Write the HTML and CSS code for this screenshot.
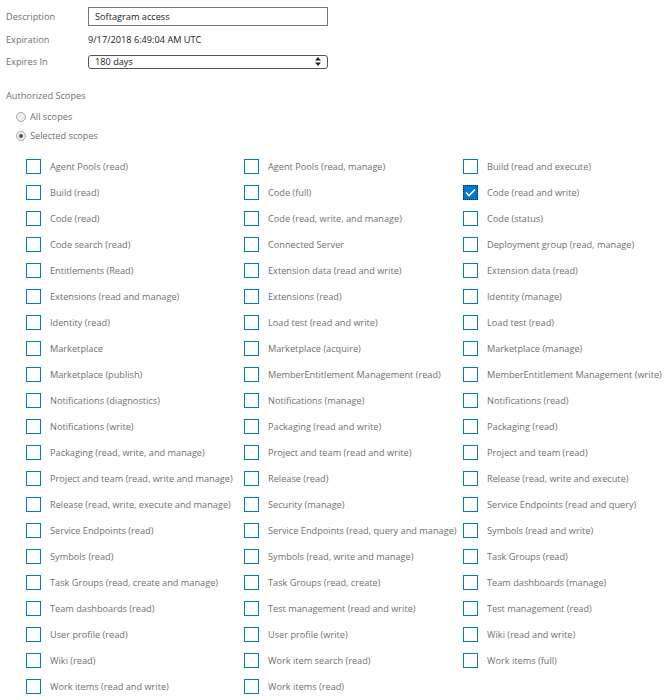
FILE: index.html
```html
<!DOCTYPE html>
<html lang="en">
<head>
    <meta charset="UTF-8">
    <title>Personal access token</title>
    <link rel="stylesheet" href="styles.css">
</head>
<body>
    <div class="form">
        <div class="field">
            <label class="field-label" for="desc">Description</label>
            <input class="text-input" id="desc" type="text" value="Softagram access">
        </div>
        <div class="field">
            <span class="field-label">Expiration</span>
            <span class="field-value">9/17/2018 6:49:04 AM UTC</span>
        </div>
        <div class="field short">
            <span class="field-label">Expires In</span>
            <div class="select">
                <span>180 days</span>
                <svg class="select-arrows" width="6" height="9" viewBox="0 0 6 9">
                    <path d="M3 0 L6 3.5 H0 Z M3 9 L6 5.5 H0 Z" fill="#222"/>
                </svg>
            </div>
        </div>
    </div>

    <h3 class="section-title">Authorized Scopes</h3>
    <div class="radios">
        <div class="radio"><span class="radio-dot"></span>All scopes</div>
        <div class="radio"><span class="radio-dot checked"></span>Selected scopes</div>
    </div>

    <div class="scopes" id="scopes"></div>

    <script>
        const scopes = [
            'Agent Pools (read)', 'Agent Pools (read, manage)', 'Build (read and execute)',
            'Build (read)', 'Code (full)', 'Code (read and write)',
            'Code (read)', 'Code (read, write, and manage)', 'Code (status)',
            'Code search (read)', 'Connected Server', 'Deployment group (read, manage)',
            'Entitlements (Read)', 'Extension data (read and write)', 'Extension data (read)',
            'Extensions (read and manage)', 'Extensions (read)', 'Identity (manage)',
            'Identity (read)', 'Load test (read and write)', 'Load test (read)',
            'Marketplace', 'Marketplace (acquire)', 'Marketplace (manage)',
            'Marketplace (publish)', 'MemberEntitlement Management (read)', 'MemberEntitlement Management (write)',
            'Notifications (diagnostics)', 'Notifications (manage)', 'Notifications (read)',
            'Notifications (write)', 'Packaging (read and write)', 'Packaging (read)',
            'Packaging (read, write, and manage)', 'Project and team (read and write)', 'Project and team (read)',
            'Project and team (read, write and manage)', 'Release (read)', 'Release (read, write and execute)',
            'Release (read, write, execute and manage)', 'Security (manage)', 'Service Endpoints (read and query)',
            'Service Endpoints (read)', 'Service Endpoints (read, query and manage)', 'Symbols (read and write)',
            'Symbols (read)', 'Symbols (read, write and manage)', 'Task Groups (read)',
            'Task Groups (read, create and manage)', 'Task Groups (read, create)', 'Team dashboards (manage)',
            'Team dashboards (read)', 'Test management (read and write)', 'Test management (read)',
            'User profile (read)', 'User profile (write)', 'Wiki (read and write)',
            'Wiki (read)', 'Work item search (read)', 'Work items (full)',
            'Work items (read and write)', 'Work items (read)'
        ];
        const checked = ['Code (read and write)'];
        const list = document.getElementById('scopes');
        for (const name of scopes) {
            const item = document.createElement('div');
            item.className = 'scope';
            const box = document.createElement('span');
            box.className = checked.includes(name) ? 'checkbox checked' : 'checkbox';
            if (checked.includes(name)) {
                box.innerHTML = '<svg width="11" height="9" viewBox="0 0 11 9"><path d="M1 4.5 L4 7.5 L10 1.5" fill="none" stroke="#fff" stroke-width="1.6"/></svg>';
            }
            const text = document.createElement('span');
            text.className = 'scope-name';
            text.innerText = name;
            item.appendChild(box);
            item.appendChild(text);
            list.appendChild(item);
        }
    </script>
</body>
</html>
```

FILE: styles.css
```css
body {
    font-family: "Open Sans", "Noto Sans", sans-serif;
    font-size: 9.2px;
    color: #707070;
    background-color: #fff;
    margin: 0;
    padding: 0;
}
.form {
    padding: 7px 0 0 6px;
}
.field {
    display: flex;
    align-items: center;
    height: 19px;
    margin-bottom: 4px;
}
.field.short {
    height: 17px;
}
.field-label {
    width: 82px;
    flex: none;
}
.field-value {
    color: #222;
}
.text-input {
    width: 240px;
    height: 19px;
    box-sizing: border-box;
    border: 1px solid #767676;
    padding: 0 6px;
    margin: 0;
    font-family: inherit;
    font-size: 9.2px;
    color: #222;
    outline: none;
}
.select {
    width: 240px;
    height: 14px;
    box-sizing: border-box;
    border: 1px solid #555;
    border-radius: 3px;
    padding: 0 6px;
    display: flex;
    align-items: center;
    justify-content: space-between;
    color: #222;
}
.section-title {
    font-size: 9.2px;
    font-weight: normal;
    margin: 19px 0 0 6px;
}
.radios {
    padding: 5px 0 0 16px;
}
.radio {
    display: flex;
    align-items: center;
    height: 19px;
}
.radio-dot {
    width: 8px;
    height: 8px;
    border: 1px solid #aaa;
    border-radius: 50%;
    background-color: #eee;
    margin-right: 4px;
    display: flex;
    align-items: center;
    justify-content: center;
}
.radio-dot.checked::after {
    content: "";
    width: 4px;
    height: 4px;
    border-radius: 50%;
    background-color: #555;
}
.scopes {
    display: grid;
    grid-template-columns: 218px 219px 206px;
    padding: 8px 0 0 26px;
}
.scope {
    display: flex;
    align-items: center;
    height: 26px;
    white-space: nowrap;
}
.checkbox {
    width: 15px;
    height: 15px;
    box-sizing: border-box;
    border: 1px solid #0078d7;
    margin-right: 9px;
    flex: none;
    display: flex;
    align-items: center;
    justify-content: center;
}
.checkbox.checked {
    background-color: #0078d7;
    outline: 1px dotted #222;
    outline-offset: -1px;
}
```
